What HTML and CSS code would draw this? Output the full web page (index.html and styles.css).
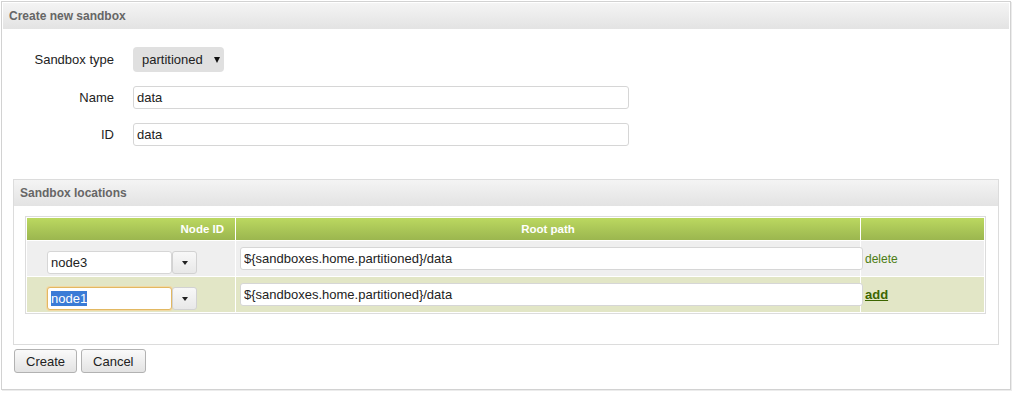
FILE: index.html
```html
<!DOCTYPE HTML>
<html lang="en">
<head>
    <meta charset="UTF-8">
    <title>Create new sandbox</title>
    <link rel="stylesheet" href="styles.css">
</head>
<body>

    <div class="panel">
        <div class="panel-header">Create new sandbox</div>

        <div class="panel-body">
            <!-- sandbox properties -->
            <div class="form">
                <div class="form-row">
                    <label class="form-label">Sandbox type</label>
                    <div class="select-button">partitioned<span class="caret"></span></div>
                </div>
                <div class="form-row">
                    <label class="form-label" for="name">Name</label>
                    <input id="name" class="text-field wide" type="text" value="data">
                </div>
                <div class="form-row">
                    <label class="form-label" for="sandboxId">ID</label>
                    <input id="sandboxId" class="text-field wide" type="text" value="data">
                </div>
            </div>

            <!-- locations -->
            <div class="fieldset">
                <div class="fieldset-header">Sandbox locations</div>
                <table class="locations">
                    <thead>
                        <tr>
                            <th class="col-node">Node ID</th>
                            <th class="col-path">Root path</th>
                            <th class="col-action"></th>
                        </tr>
                    </thead>
                    <tbody>
                        <tr class="row-saved">
                            <td class="cell-node">
                                <div class="combo">
                                    <input class="text-field node-field" type="text" value="node3">
                                    <span class="combo-button"><span class="combo-caret"></span></span>
                                </div>
                            </td>
                            <td class="cell-path">
                                <input class="text-field path-field" type="text" value="${sandboxes.home.partitioned}/data">
                            </td>
                            <td class="cell-action"><a href="#" class="link-delete">delete</a></td>
                        </tr>
                        <tr class="row-new">
                            <td class="cell-node">
                                <div class="combo">
                                    <div class="text-field node-field focused"><span class="selected">node1</span></div>
                                    <span class="combo-button"><span class="combo-caret"></span></span>
                                </div>
                            </td>
                            <td class="cell-path">
                                <input class="text-field path-field" type="text" value="${sandboxes.home.partitioned}/data">
                            </td>
                            <td class="cell-action"><a href="#" class="link-add">add</a></td>
                        </tr>
                    </tbody>
                </table>
            </div>

            <div class="actions">
                <button class="btn">Create</button>
                <button class="btn">Cancel</button>
            </div>
        </div>
    </div>

</body>
</html>
```

FILE: styles.css
```css
body {
    margin: 0;
    font-family: "Liberation Sans", Arial, sans-serif;
    font-size: 13px;
    color: #222;
    background: #fff;
}
.panel {
    margin: 1px 2px 1px 1px;
    border: 1px solid #d2d2d2;
    padding: 1px;
    box-shadow: 1px 1px 0 #ececec;
}
.panel-header {
    height: 26px;
    line-height: 26px;
    padding-left: 6px;
    background: linear-gradient(#f4f4f4, #e3e3e3);
    color: #666;
    font-size: 12px;
    font-weight: bold;
}
.panel-body {
    padding-top: 18px;
    padding-bottom: 15px;
}
.form {
    display: flex;
    flex-direction: column;
    gap: 14px;
}
.form-row {
    display: flex;
    align-items: center;
}
.form-label {
    width: 111px;
    margin-right: 19px;
    text-align: right;
}
.select-button {
    display: flex;
    align-items: center;
    justify-content: space-between;
    box-sizing: border-box;
    width: 91px;
    height: 25px;
    padding: 0 4px 0 9px;
    background: #e0e0e0;
    border-radius: 4px;
    color: #222;
}
.caret {
    width: 0;
    height: 0;
    border-left: 3px solid transparent;
    border-right: 3px solid transparent;
    border-top: 6px solid #111;
}
.text-field {
    box-sizing: border-box;
    height: 23px;
    padding: 0 3px;
    border: 1px solid #d6d6d6;
    border-radius: 3px;
    background: #fff;
    font-family: "Liberation Sans", Arial, sans-serif;
    font-size: 13px;
    color: #222;
    outline: none;
}
.wide {
    width: 496px;
}
.fieldset {
    margin: 33px 10px 0 10px;
    border: 1px solid #dcdcdc;
}
.fieldset-header {
    height: 26px;
    line-height: 26px;
    padding-left: 6px;
    background: linear-gradient(#f4f4f4, #e3e3e3);
    color: #666;
    font-size: 12px;
    font-weight: bold;
}
.locations {
    width: calc(100% - 23px);
    margin: 10px 12px 30px 11px;
    table-layout: fixed;
    border: 1px solid #dcdcdc;
    border-spacing: 1px;
    background: #fff;
}
.locations thead tr {
    height: 22px;
}
th {
    padding: 0;
    background: linear-gradient(#bbd860, #9bb64f);
    color: #fff;
    font-size: 11.5px;
    font-weight: bold;
}
.col-node {
    width: 197px;
    padding-right: 11px;
    text-align: right;
}
.col-path {
    width: 624px;
    text-align: center;
}
.locations tbody tr {
    height: 35px;
}
td {
    padding: 0;
}
.row-saved td {
    background: #efefef;
}
.row-new td {
    background: #e2e6c6;
}
.cell-node {
    vertical-align: top;
    padding: 10px 0 0 20px;
}
.cell-path {
    vertical-align: top;
    padding: 6px 0 0 4px;
}
.cell-action {
    vertical-align: middle;
    padding-left: 4px;
}
.combo {
    display: flex;
}
.node-field {
    width: 125px;
    line-height: 21px;
}
.focused {
    border-color: #e2b862;
    box-shadow: 0 0 0 1px #f1d9a4;
}
.selected {
    background: #3a7bd6;
    color: #fff;
}
.combo-button {
    display: flex;
    align-items: center;
    justify-content: center;
    box-sizing: border-box;
    width: 25px;
    height: 23px;
    border: 1px solid #d2d2d2;
    border-radius: 3px;
    background: linear-gradient(#f8f8f8, #e8e8e8);
}
.combo-caret {
    width: 0;
    height: 0;
    border-left: 3px solid transparent;
    border-right: 3px solid transparent;
    border-top: 4px solid #222;
}
.path-field {
    width: 623px;
}
.link-delete {
    color: #4c7d12;
    font-size: 12px;
    text-decoration: none;
}
.link-add {
    color: #3c6500;
    font-weight: bold;
    text-decoration: underline;
}
.actions {
    display: flex;
    gap: 4px;
    margin: 4px 0 0 11px;
}
.btn {
    height: 24px;
    padding: 0 11px;
    border: 1px solid #b2b2b2;
    border-radius: 3px;
    background: linear-gradient(#fafafa, #e3e3e3);
    font-family: "Liberation Sans", Arial, sans-serif;
    font-size: 13px;
    color: #222;
}
```
